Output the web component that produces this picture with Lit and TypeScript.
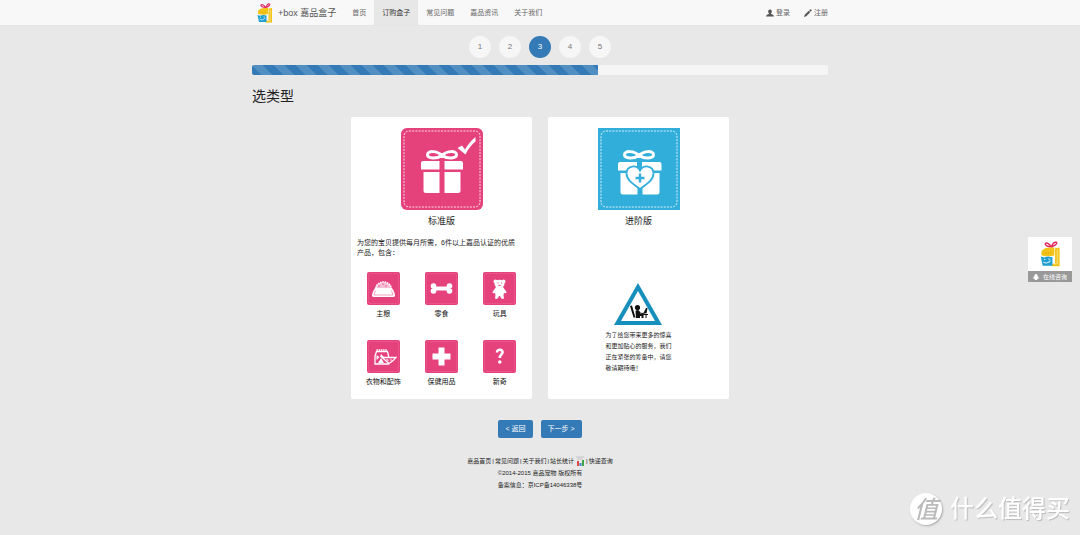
import { LitElement, html, css, svg } from "lit";
import { customElement, property } from "lit/decorators.js";

const logo = html`
  <svg class="logo" viewBox="0 0 32 40" aria-hidden="true">
    <g fill="none" stroke="#e0245e" stroke-width="2.2" stroke-linecap="round">
      <path d="M17 9C12 9 7 7 8 4c2-2 7 0 9 5z" />
      <path d="M18 9c0-4 4-8 7-7 2 2-2 5-7 7z" />
    </g>
    <path d="M2 17c1-5 8-7 14-7h6v12c-5 2-14 2-20 0z" fill="#f2c318" />
    <path d="M23 11l7-1v29H18v-4h5z" fill="#f2c318" />
    <path d="M26.500 13v22H20" fill="none" stroke="#fbeaa6" stroke-width="1.200" />
    <path d="M1 24l5 1.500 6-1.500 7 1v13H4z" fill="#1e9fd0" />
    <path d="M5 32c3 3 9 2 11-2" fill="none" stroke="#d6eff8" stroke-width="1.600" />
    <path d="M6 28.500h2m5-.5h2.500" stroke="#d6eff8" stroke-width="1.800" />
    <path d="M6 18c4 1.500 8 1.500 11-.5" fill="none" stroke="#e3a90c" stroke-width="1.200" />
  </svg>
`;

const bow = svg`
  <path fill="none" stroke="#fff" stroke-width="3" stroke-linejoin="round"
    d="M41 27.500C36 22.500 26.500 22.500 26.500 26.500 26.500 31 36 31 41 27.500zM41 27.500C46 22.500 55.500 22.500 55.500 26.500 55.500 31 46 31 41 27.500z" />
  <ellipse cx="41" cy="27.500" rx="3.500" ry="2.500" fill="#fff" />
`;

const giftStandard = html`
  <svg class="gift" viewBox="0 0 82 82" aria-hidden="true">
    <rect width="82" height="82" rx="6" fill="#e5417b" />
    <rect x="3" y="3" width="76" height="76" rx="5" fill="none" stroke="#fbdbe7" stroke-width="1" stroke-dasharray="2 1.200" />
    ${bow}
    <path fill="#fff" d="M22 33h16.500v8.500H20V35a2 2 0 0 1 2-2zM43.500 33H60a2 2 0 0 1 2 2v6.500H43.500zM22.500 44h16v21H25a2.500 2.500 0 0 1-2.500-2.500zM43.500 44h16v18.500A2.500 2.500 0 0 1 57 65H43.500z" />
    <path fill="#fff" d="M56.500 20l4.500-2.500 3 4c3-5 6-9 10.500-12.500v4.500c-4 3-7 7-10 13z" />
  </svg>
`;

const giftAdvanced = html`
  <svg class="gift" viewBox="0 0 82 82" aria-hidden="true">
    <rect width="82" height="82" fill="#32aedb" />
    <rect x="3" y="3" width="76" height="76" rx="5" fill="none" stroke="#d5effa" stroke-width="1" stroke-dasharray="2 1.200" />
    ${bow}
    <path fill="#fff" d="M22 34h17v8.500H20V36a2 2 0 0 1 2-2zM44 34h17.500a2 2 0 0 1 2 2v6.500H44zM22.500 45h17v21.500H25a2.500 2.500 0 0 1-2.500-2.500zM44.500 45h17v19a2.500 2.500 0 0 1-2.500 2.500H44.500z" />
    <path fill="#fff" stroke="#32aedb" stroke-width="1.800" d="M42 61C35 56 28.500 52 28.500 45.500c0-8 10-9.500 13.500-3 3.500-6.500 13.500-5 13.500 3C55.500 52 49 56 42 61z" />
    <path fill="none" stroke="#32aedb" stroke-width="2.400" d="M42 45.500v9M37.500 50h9" />
  </svg>
`;

const glyphs: Record<string, unknown> = {
  bowl: svg`
    <path d="M8 17c1-9 16-9 17 0z" fill="#f7bfd3" />
    <path d="M9 16c1-8 14-8 15 0" fill="none" stroke="#fff" stroke-width="1.600" stroke-dasharray="1.500 .8" />
    <path d="M11 14h2m2-2h2m1 2h2" stroke="#e5417b" stroke-width=".7" />
    <path d="M8 16h17c2 3 3 6 3 7.500q0 1.500-2 1.500H7q-2 0-2-1.500C5 22 6 19 8 16z" fill="#fff" />
    <path d="M8.500 18.500L7 23h19l-1.500-4.500" fill="none" stroke="#e5417b" stroke-width=".5" />`,
  bone: svg`
    <path d="M9 16.500h15" stroke="#fff" stroke-width="4" />
    <g fill="#fff"><circle cx="8.500" cy="14" r="2.800" /><circle cx="8.500" cy="19" r="2.800" /><circle cx="24.500" cy="14" r="2.800" /><circle cx="24.500" cy="19" r="2.800" /></g>`,
  bear: svg`
    <g fill="#fff"><circle cx="12.500" cy="9.500" r="2" /><circle cx="20.500" cy="9.500" r="2" /><ellipse cx="16.500" cy="12" rx="5" ry="4.200" />
    <path d="M13 15h7l3.500 5q0 2-2.500 1l-.5 2 .5 3.500q-3 1.500-4-2.500h-1q-1 4-4 2.500l.5-3.500-.5-2q-2.500 1-2.500-1z" /></g>
    <path d="M14.500 11h1m2.500 0h1M15.500 13.500h2" stroke="#e5417b" stroke-width="1" />`,
  clothes: svg`
    <path d="M9.500 11.500h11l1 4v8.500H8v-8z" fill="none" stroke="#fff" stroke-width="1.300" />
    <path d="M9.500 10h11" stroke="#fff" stroke-width="1.500" stroke-dasharray="1.500 .7" />
    <path d="M9.500 15l3 2-3 3zM14 14l3 3h-4zM11 23l3-5 3 5z" fill="#fff" />
    <path d="M15 17.500h14q-2 3-7 6z" fill="#e5417b" stroke="#fff" stroke-width="1.300" />
    <path d="M19.500 19.500l2 1m2-1l1 1" stroke="#fff" stroke-width="1.300" />`,
  health: svg`<path d="M13.500 7.500h6v6h6v6h-6v6h-6v-6h-6v-6h6z" fill="#fff" />`,
  novelty: svg`
    <path d="M14 12.500c0-4 6-3.500 5.500 0-.3 2-2.700 2-2.700 5.500" fill="none" stroke="#fff" stroke-width="2.600" />
    <circle cx="16.800" cy="22" r="1.800" fill="#fff" />`,
};

@customElement("product-tile")
class ProductTile extends LitElement {
  @property() icon = "";
  @property() label = "";

  static styles = css`
    :host { display: flex; flex-direction: column; align-items: center; gap: 4px; }
    .icon { width: 33px; height: 33px; }
    .label { font-size: 7px; line-height: 10px; color: #111; white-space: nowrap; }
  `;

  render() {
    return html`
      <svg class="icon" viewBox="0 0 33 33" aria-hidden="true">
        <rect width="33" height="33" rx="2" fill="#e5417b" />
        <rect x="1.500" y="1.500" width="30" height="30" rx="1.500" fill="none" stroke="#f07fa6" stroke-width=".5" stroke-dasharray="1 .6" />
        ${glyphs[this.icon]}
      </svg>
      <span class="label">${this.label}</span>
    `;
  }
}

@customElement("app-root")
class AppRoot extends LitElement {
  @property({ type: Number }) step = 3;

  private steps = [1, 2, 3, 4, 5];
  private links = ["首页", "订购盒子", "常见问题", "嘉品资讯", "关于我们"];
  private products = [
    ["bowl", "主粮"],
    ["bone", "零食"],
    ["bear", "玩具"],
    ["clothes", "衣物和配饰"],
    ["health", "保健用品"],
    ["novelty", "新奇"],
  ];

  static styles = css`
    :host {
      display: block;
      min-height: 100vh;
      background: #e8e8e8;
      color: #222;
      font-family: "Liberation Sans", "Noto Sans CJK SC", sans-serif;
      font-size: 7px;
      line-height: 10px;
    }
    * { box-sizing: border-box; }
    a { color: inherit; text-decoration: none; }
    .container { max-width: 576px; margin: 0 auto; }

    .navbar { background: #f8f8f8; border-bottom: 1px solid #e4e4e4; color: #666; }
    .navbar .container { display: flex; align-items: stretch; height: 25px; }
    .brand { display: flex; align-items: center; gap: 5px; padding: 0 8px 0 5px; font-size: 9px; color: #555; white-space: nowrap; }
    .brand .logo { width: 16px; height: 20px; }
    .menu { display: flex; }
    .account { display: flex; gap: 14px; margin-left: auto; }
    .menu a, .account a { display: flex; align-items: center; gap: 2px; white-space: nowrap; }
    .menu a { padding: 0 8px; }
    .menu .active { background: #e7e7e7; color: #333; }
    .account svg { width: 8px; height: 8px; fill: #555; }

    .steps { display: flex; justify-content: center; gap: 8px; margin: 0; padding: 10px 0 7px; list-style: none; }
    .step { display: grid; place-items: center; width: 22px; height: 22px; border-radius: 50%; background: #f6f6f6; color: #777; font-size: 8px; }
    .step.current { background: #337ab7; color: #fff; }
    .progress { height: 10px; border-radius: 2px; overflow: hidden; background: #f5f5f5; }
    .bar {
      height: 100%;
      background-color: #337ab7;
      background-image: linear-gradient(45deg, rgba(255, 255, 255, .15) 25%, transparent 25%, transparent 50%, rgba(255, 255, 255, .15) 50%, rgba(255, 255, 255, .15) 75%, transparent 75%, transparent);
      background-size: 22px 22px;
    }
    h1 { margin: 11px 0; font-size: 14px; line-height: 20px; font-weight: 400; color: #222; }

    .cards { display: flex; justify-content: center; gap: 16px; }
    .card { display: flex; flex-direction: column; align-items: center; flex: 0 1 181px; padding: 11px 3px 12px; background: #fff; border-radius: 2px; }
    .gift { width: 82px; height: 82px; }
    h2 { margin: 4px 0 10px; font-size: 9px; line-height: 14px; font-weight: 400; color: #222; }
    .intro { margin: 0; padding: 0 8px 0 3px; }
    .products { display: grid; grid-template-columns: repeat(3, 1fr); row-gap: 21px; align-self: stretch; margin-top: 14px; }
    .pending { display: flex; flex-direction: column; align-items: center; gap: 4px; margin-top: 44px; }
    .sign { width: 48px; height: 44px; }
    .notice { margin: 0; font-size: 6px; line-height: 11px; white-space: nowrap; }

    .actions { display: flex; justify-content: center; gap: 8px; padding: 21px 0 17px; }
    .actions button { height: 18px; padding: 0 7px; border: 0; border-radius: 2px; background: #337ab7; color: #fff; font: inherit; font-size: 7px; }
    footer { text-align: center; font-size: 6px; line-height: 12px; }
    footer p { display: flex; justify-content: center; align-items: center; gap: 1px; margin: 0; }
    .chart { width: 10px; height: 10px; }

    .chat { position: fixed; top: 237px; right: 8px; width: 44px; text-align: center; }
    .chat .picture { display: grid; place-items: center; height: 34px; background: #fff; }
    .chat .logo { width: 21px; height: 26px; }
    .chat .caption { display: flex; align-items: center; justify-content: center; gap: 4px; height: 11px; background: #999; color: #fff; font-size: 6px; }
    .chat .caption svg { width: 6px; height: 6px; fill: #fff; }
    .watermark { position: fixed; right: 10px; bottom: 9px; display: flex; align-items: center; gap: 8px; color: #fff; font-size: 24px; line-height: 34px; font-weight: 500; text-shadow: 1px 1px 1px #bbb; }
    .seal { display: grid; place-items: center; width: 32px; height: 32px; border-radius: 50%; background: #fff; color: #bbb; box-shadow: 1px 1px 2px #aaa; text-shadow: none; font-style: italic; }
  `;

  render() {
    return html`
      <nav class="navbar">
        <div class="container">
          <a class="brand" href="#">${logo}<span>+box 嘉品盒子</span></a>
          <div class="menu">
            ${this.links.map((l, i) => html`<a href="#" class=${i === 1 ? "active" : ""}>${l}</a>`)}
          </div>
          <div class="account">
            <a href="#">
              <svg viewBox="0 0 16 16"><path d="M8 1c3 0 4 2 3.500 5-.3 2-1.500 2.500-1.500 4 2 1 6 1.500 6 5H0c0-3.500 4-4 6-5 0-1.500-1.200-2-1.500-4C4 3 5 1 8 1z" /></svg>登录
            </a>
            <a href="#">
              <svg viewBox="0 0 16 16"><path d="M0 16l1.500-4.500 8-8 3 3-8 8zM10.500 2.500L12 1q1-1 2 0l1 1q1 1 0 2l-1.500 1.500z" /></svg>注册
            </a>
          </div>
        </div>
      </nav>

      <main class="container">
        <ol class="steps">
          ${this.steps.map((n) => html`<li class="step ${n === this.step ? "current" : ""}">${n}</li>`)}
        </ol>
        <div class="progress" role="progressbar" aria-valuenow=${this.step} aria-valuemax="5">
          <div class="bar" style="width: ${(this.step / this.steps.length) * 100}%"></div>
        </div>
        <h1>选类型</h1>

        <div class="cards">
          <section class="card">
            ${giftStandard}
            <h2>标准版</h2>
            <p class="intro">为您的宝贝提供每月所需，6件以上嘉品认证的优质产品，包含：</p>
            <div class="products">
              ${this.products.map(([icon, label]) => html`<product-tile icon=${icon} label=${label}></product-tile>`)}
            </div>
          </section>
          <section class="card">
            ${giftAdvanced}
            <h2>进阶版</h2>
            <div class="pending">
              <svg class="sign" viewBox="0 0 48 44" aria-hidden="true">
                <path d="M24 1L48 43H0z" fill="#168fbd" />
                <path d="M24 9L41 39H7z" fill="#fff" />
                <path d="M16 24l2-.5 3.500 12h-2z" fill="#111" />
                <path d="M21.500 29q2-2 4 0l1 3h3v4h-2v-2h-1.500v2h-4z" fill="#111" />
                <path d="M25 30.500l3 1 3-.5M27 32.500h7M32 32.500V36" fill="none" stroke="#111" stroke-width="1" />
                <path d="M29.500 31l2.500-5 1.500 0-1 5.500z" fill="#111" />
                <circle cx="23.500" cy="25.500" r="2.600" fill="#111" />
              </svg>
              <p class="notice">为了给您带来更多的惊喜<br />和更加贴心的服务，我们<br />正在紧张的筹备中，请您<br />敬请期待哦！</p>
            </div>
          </section>
        </div>

        <div class="actions">
          <button type="button">&lt; 返回</button>
          <button type="button">下一步 &gt;</button>
        </div>
      </main>

      <footer>
        <p>
          <a href="#">嘉品首页</a>|<a href="#">常见问题</a>|<a href="#">关于我们</a>|<a href="#">站长统计</a>
          <svg class="chart" viewBox="0 0 10 10" aria-hidden="true">
            <path d="M1 1h8M2 3h6" stroke="#bbb" stroke-width=".8" />
            <path d="M2 5h2v5H2z" fill="#e04848" /><path d="M4.500 7h2v3h-2z" fill="#4a7fd0" /><path d="M7 4h2v6H7z" fill="#3fa648" />
          </svg>
          |<a href="#">快递查询</a>
        </p>
        <p>©2014-2015 嘉品宠物 版权所有</p>
        <p>备案信息：京ICP备14046338号</p>
      </footer>

      <a class="chat" href="#">
        <span class="picture">${logo}</span>
        <span class="caption"><svg viewBox="0 0 12 12"><path d="M6 0c3 0 3 3 3 4 2 1 3 3 2 6l-2-1c0 2-1 3-3 3s-3-1-3-3l-2 1C0 7 1 5 3 4c0-1 0-4 3-4z" /></svg>在线咨询</span>
      </a>
      <div class="watermark"><span class="seal">值</span><span>什么值得买</span></div>
    `;
  }
}
